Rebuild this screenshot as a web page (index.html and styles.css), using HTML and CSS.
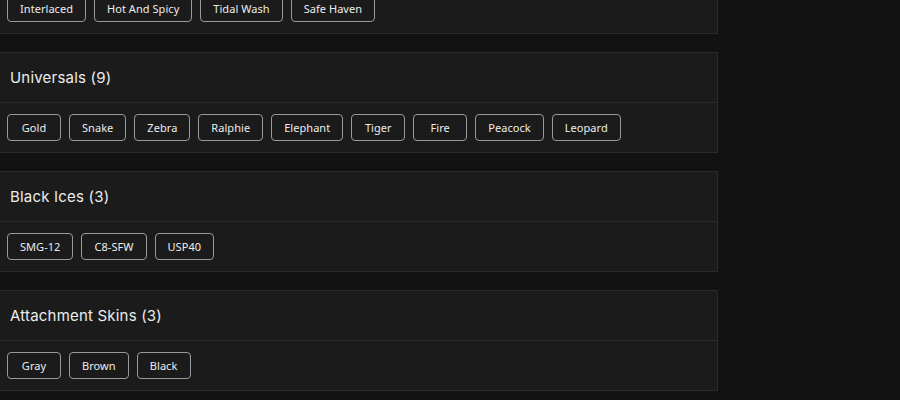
FILE: index.html
```html
<!DOCTYPE html>
<html lang="en">
<head>
<meta charset="utf-8">
<title>Skins</title>
<link rel="stylesheet" href="styles.css">
</head>
<body>
<main class="list">
  <section class="group">
    <h2 class="group-title">Animated Skins (4)</h2>
    <div class="group-items">
      <button class="chip">Interlaced</button>
      <button class="chip">Hot And Spicy</button>
      <button class="chip">Tidal Wash</button>
      <button class="chip">Safe Haven</button>
    </div>
  </section>
  <section class="group">
    <h2 class="group-title">Universals (9)</h2>
    <div class="group-items">
      <button class="chip">Gold</button>
      <button class="chip">Snake</button>
      <button class="chip">Zebra</button>
      <button class="chip">Ralphie</button>
      <button class="chip">Elephant</button>
      <button class="chip">Tiger</button>
      <button class="chip">Fire</button>
      <button class="chip">Peacock</button>
      <button class="chip">Leopard</button>
    </div>
  </section>
  <section class="group">
    <h2 class="group-title">Black Ices (3)</h2>
    <div class="group-items">
      <button class="chip">SMG-12</button>
      <button class="chip">C8-SFW</button>
      <button class="chip">USP40</button>
    </div>
  </section>
  <section class="group">
    <h2 class="group-title">Attachment Skins (3)</h2>
    <div class="group-items">
      <button class="chip">Gray</button>
      <button class="chip">Brown</button>
      <button class="chip">Black</button>
    </div>
  </section>
</main>
</body>
</html>
```
FILE: styles.css
```css
html, body {
  margin: 0;
  background: #121212;
  color: #e4e4e4;
  font-family: "Noto Sans", "DejaVu Sans", sans-serif;
}

/* list is scrolled so the first group's header sits above the fold */
.list {
  width: 718px;
  margin-top: -67px;
  display: flex;
  flex-direction: column;
  gap: 18px;
}

.group {
  background: #1b1b1b;
  border: 1px solid #2a2a2a;
  border-left: none;
}

.group-title {
  margin: 0;
  height: 49px;
  display: flex;
  align-items: center;
  padding-left: 10px;
  font-family: "Inter", sans-serif;
  font-size: 15px;
  font-weight: 400;
  letter-spacing: 0.2px;
  color: #ececec;
  border-bottom: 1px solid #2a2a2a;
}

.group-items {
  display: flex;
  flex-wrap: wrap;
  gap: 8px;
  padding: 11px 7px;
}

.chip {
  box-sizing: border-box;
  height: 27px;
  min-width: 54px;
  padding: 0 12px;
  background: #1b1b1b;
  color: #ededed;
  border: 1px solid #9a9a9a;
  border-radius: 4px;
  font-family: "Noto Sans", sans-serif;
  font-size: 11px;
  letter-spacing: 0.05px;
  cursor: pointer;
}
```
